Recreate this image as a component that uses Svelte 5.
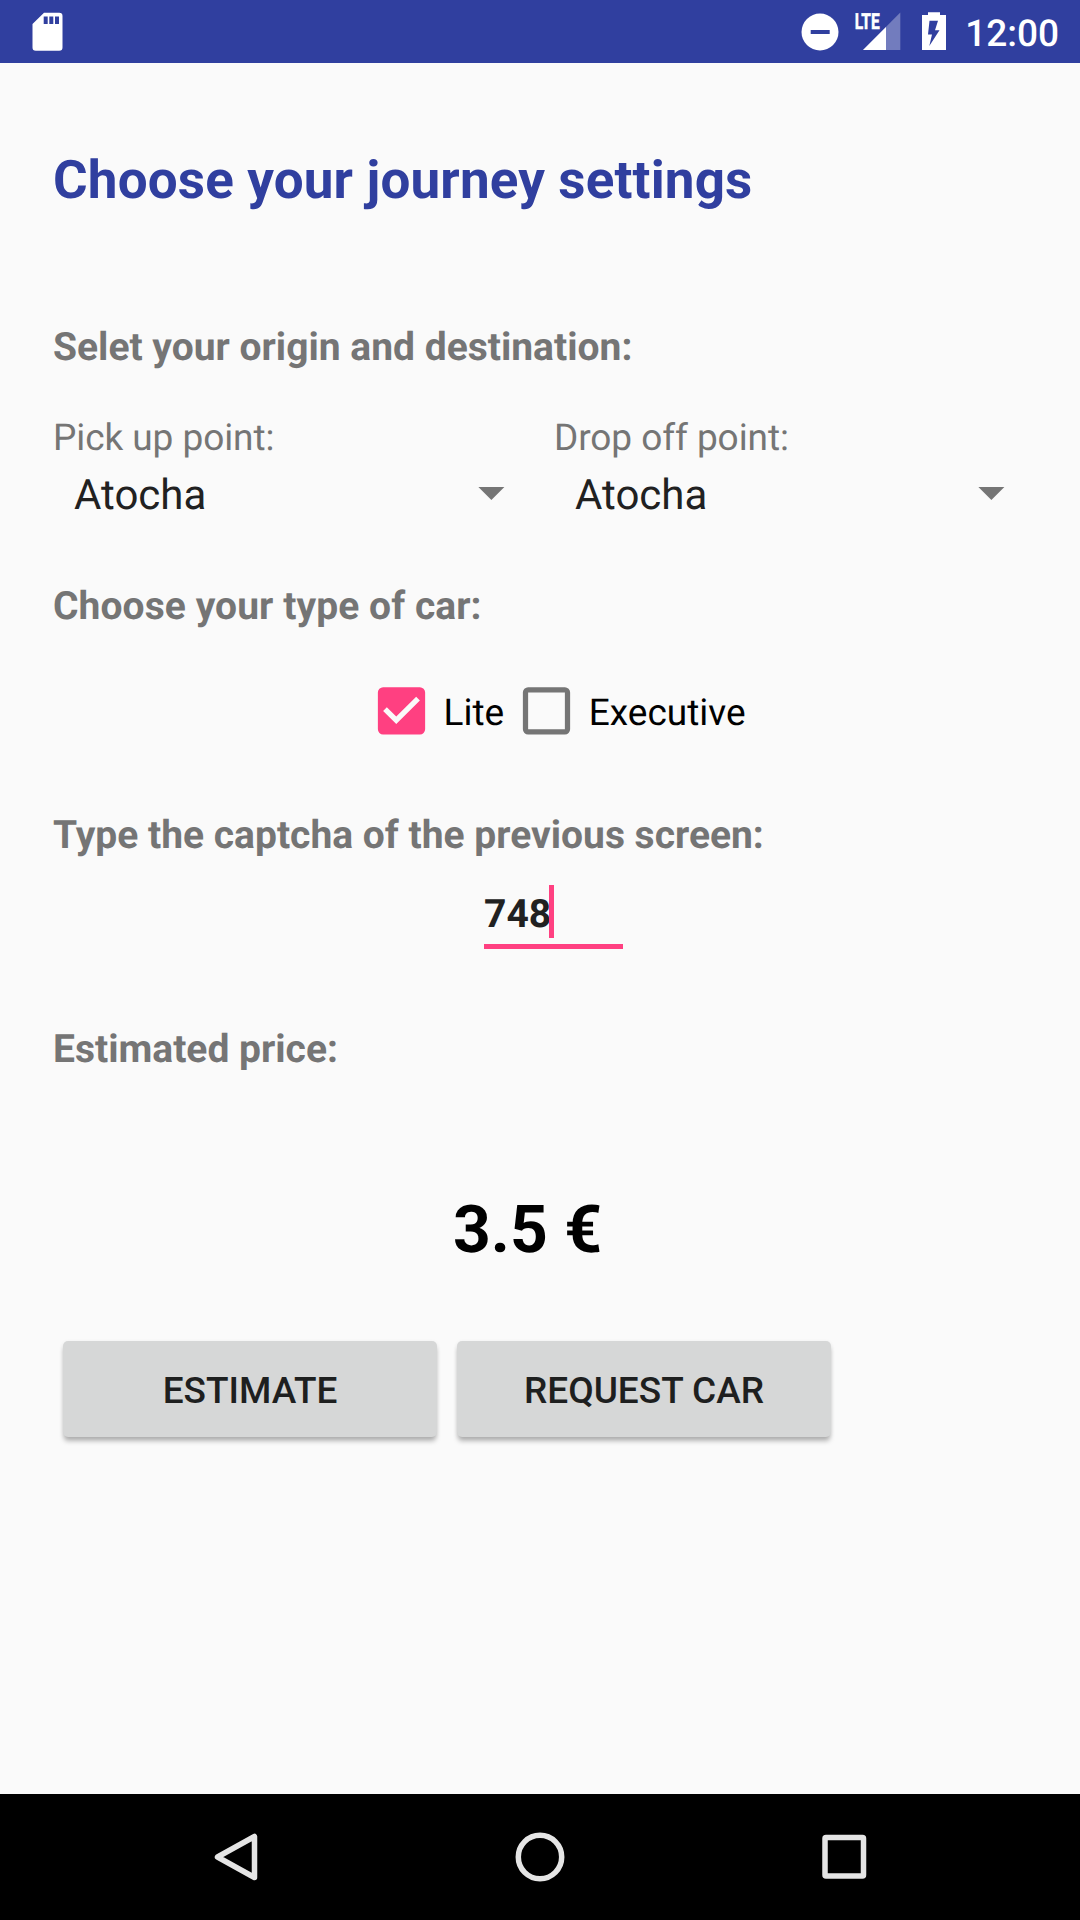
<script>
  const stops = [
    { label: 'Pick up point:', value: 'Atocha' },
    { label: 'Drop off point:', value: 'Atocha' }
  ];
  const cars = [
    { name: 'Lite', checked: true },
    { name: 'Executive', checked: false }
  ];
  const captcha = '748';
  const price = '3.5 €';
</script>

<div class="screen">
  <header class="status">
    <svg class="sd" width="32" height="40" viewBox="0 0 32 40">
      <path fill="#fff" fill-rule="evenodd" d="M12 .7H27.2a3.3 3.3 0 0 1 3.3 3.3V35.400a3.300 3.300 0 0 1-3.300 3.300H3.800a3.300 3.300 0 0 1-3.300-3.300V12zM11.700 4.500V12h4V4.500zM17.300 4.500V12h4V4.500zM23 4.500V12h4V4.500z" />
    </svg>
    <div class="tray">
      <svg class="dnd" width="38" height="63" viewBox="0 0 38 63">
        <circle cx="19" cy="32" r="18.5" fill="#fff" />
        <path d="M9.700 30h19v4h-19z" fill="#303f9f" />
      </svg>
      <svg class="signal" width="46" height="63" viewBox="0 0 46 63">
        <path d="M45.300 12.500V50H8z" fill="#fff" opacity=".32" />
        <path d="M31 27V50H8z" fill="#fff" />
        <text x="-.3" y="29" textLength="25" lengthAdjust="spacingAndGlyphs">LTE</text>
      </svg>
      <svg class="battery" width="24" height="63" viewBox="0 0 24 63">
        <path fill="#fff" fill-rule="evenodd" d="M6 12.300h12V15h6V50H0V15h6zM7.500 20.700 6 34.500h4L7.300 46 17.500 30.300H13L16 20.700z" />
      </svg>
      <span class="clock">12:00</span>
    </div>
  </header>

  <main>
    <h1>Choose your journey settings</h1>

    <h2 class="route">Selet your origin and destination:</h2>
    <div class="stops">
      {#each stops as stop}
        <div class="stop">
          <div class="label">{stop.label}</div>
          <div class="spinner">
            <span>{stop.value}</span>
            <svg width="27" height="13" viewBox="0 0 27 13"><path d="M.4 0H26.400L13.400 13z" fill="#757575" /></svg>
          </div>
        </div>
      {/each}
    </div>

    <h2 class="type">Choose your type of car:</h2>
    <div class="cars">
      {#each cars as car}
        <div class="car">
          <svg width="63" height="63" viewBox="0 -0.15 24 24">
            {#if car.checked}
              <path fill="#ff4081" d="M19 3H5a2 2 0 0 0-2 2v14a2 2 0 0 0 2 2h14a2 2 0 0 0 2-2V5a2 2 0 0 0-2-2zm-9 14-5-5 1.410-1.410L10 14.170l7.590-7.590L19 8z" />
            {:else}
              <path fill="#757575" d="M19 5v14H5V5h14m0-2H5a2 2 0 0 0-2 2v14a2 2 0 0 0 2 2h14a2 2 0 0 0 2-2V5a2 2 0 0 0-2-2z" />
            {/if}
          </svg>
          <span>{car.name}</span>
        </div>
      {/each}
    </div>

    <h2 class="captcha">Type the captcha of the previous screen:</h2>
    <div class="field"><span>{captcha}</span><i class="caret"></i></div>

    <h2 class="estimated">Estimated price:</h2>
    <div class="price">{price}</div>

    <div class="actions">
      <button>ESTIMATE</button>
      <button>REQUEST CAR</button>
    </div>
  </main>

  <nav>
    <svg width="50" height="50" viewBox="0 0 50 50"><path d="M43.500 4.500V45.500L6.500 25z" /></svg>
    <svg width="50" height="50" viewBox="0 0 50 50"><circle cx="25" cy="25" r="21.700" /></svg>
    <svg width="50" height="50" viewBox="0 0 50 50"><rect x="6" y="5.500" width="38.500" height="38.500" rx="1" /></svg>
  </nav>
</div>

<style>
  :global(body) {
    margin: 0;
    background: #fafafa;
  }
  .screen {
    display: flex;
    flex-direction: column;
    width: 1080px;
    height: 1920px;
    overflow: hidden;
    background: #fafafa;
    font-family: Roboto, sans-serif;
    text-rendering: geometricPrecision;
  }
  svg {
    display: block;
    flex: none;
  }
  .status {
    display: flex;
    justify-content: space-between;
    align-items: flex-start;
    height: 63px;
    padding: 0 21px 0 32px;
    background: #303f9f;
  }
  .sd {
    margin-top: 12px;
  }
  .tray {
    display: flex;
  }
  .signal {
    margin-left: 16px;
    overflow: visible;
  }
  .signal text {
    font: 700 22px Roboto, sans-serif;
    fill: #fff;
    stroke: #fff;
    stroke-width: 0.5;
  }
  .battery {
    margin-left: 21px;
  }
  .clock {
    width: 94px;
    margin: 13px 0 0 19px;
    color: #fff;
    font-size: 37px;
    font-weight: 500;
    line-height: 43px;
    text-align: right;
    white-space: nowrap;
  }
  main {
    flex: 1;
    padding: 86px 25px 0 53px;
  }
  h1,
  h2 {
    margin: 0;
    font-weight: 700;
    white-space: nowrap;
  }
  h1 {
    color: #303f9f;
    font-size: 53px;
    letter-spacing: 0.15px;
    line-height: 62px;
  }
  h2 {
    color: #757575;
    font-size: 39px;
    line-height: 48px;
  }
  .route {
    margin-top: 112px;
  }
  .stops {
    display: grid;
    grid-template-columns: 501px 500px;
    margin-top: 45px;
  }
  .label {
    color: #757575;
    font-size: 37px;
    letter-spacing: -0.07px;
    line-height: 45px;
  }
  .spinner {
    display: flex;
    justify-content: space-between;
    align-items: flex-start;
    height: 49px;
    margin-top: 9px;
    padding: 0 49px 0 21px;
    color: #212121;
    font-size: 42px;
    line-height: 49px;
  }
  .spinner span {
    padding-top: 1px;
  }
  .spinner svg {
    margin-top: 17px;
  }
  .type {
    margin-top: 63px;
    letter-spacing: 0.07px;
  }
  .cars {
    display: flex;
    gap: 0.7px;
    height: 63px;
    margin-top: 49px;
    padding-left: 306.5px;
  }
  .car {
    display: flex;
    align-items: center;
    gap: 10.5px;
    padding-left: 10.5px;
    color: #000;
    font-size: 37px;
    line-height: 43px;
  }
  .car span {
    margin-top: 5px;
  }
  .captcha {
    margin-top: 69px;
  }
  .field {
    display: flex;
    width: 139px;
    height: 59px;
    margin: 26px 0 0 431px;
    border-bottom: 5px solid #ff4081;
    color: #212121;
    font-size: 39px;
    font-weight: 700;
    line-height: 47px;
  }
  .field span {
    padding-top: 6px;
  }
  .caret {
    width: 5px;
    height: 53px;
    margin-left: -2px;
    background: #ff4081;
  }
  .estimated {
    margin-top: 76px;
  }
  .price {
    margin: 119px 0 0 400px;
    color: #000;
    font-size: 66px;
    font-weight: 700;
    line-height: 77px;
  }
  .actions {
    display: flex;
    gap: 20px;
    margin: 72px 0 0 10px;
  }
  button {
    width: 374px;
    height: 96px;
    padding: 3px 0 0;
    border: 0;
    border-radius: 5px;
    background: #d6d7d7;
    box-shadow: 0 5px 5px -1px rgba(0, 0, 0, 0.28), 0 1px 4px rgba(0, 0, 0, 0.07);
    color: #1e1f1f;
    font: 500 37px/43px Roboto, sans-serif;
  }
  nav {
    display: flex;
    justify-content: center;
    gap: 254px;
    height: 88px;
    padding-top: 38px;
    background: #000;
  }
  nav svg {
    fill: none;
    stroke: #e5e5e5;
    stroke-width: 5.5;
    stroke-linejoin: round;
  }
</style>
